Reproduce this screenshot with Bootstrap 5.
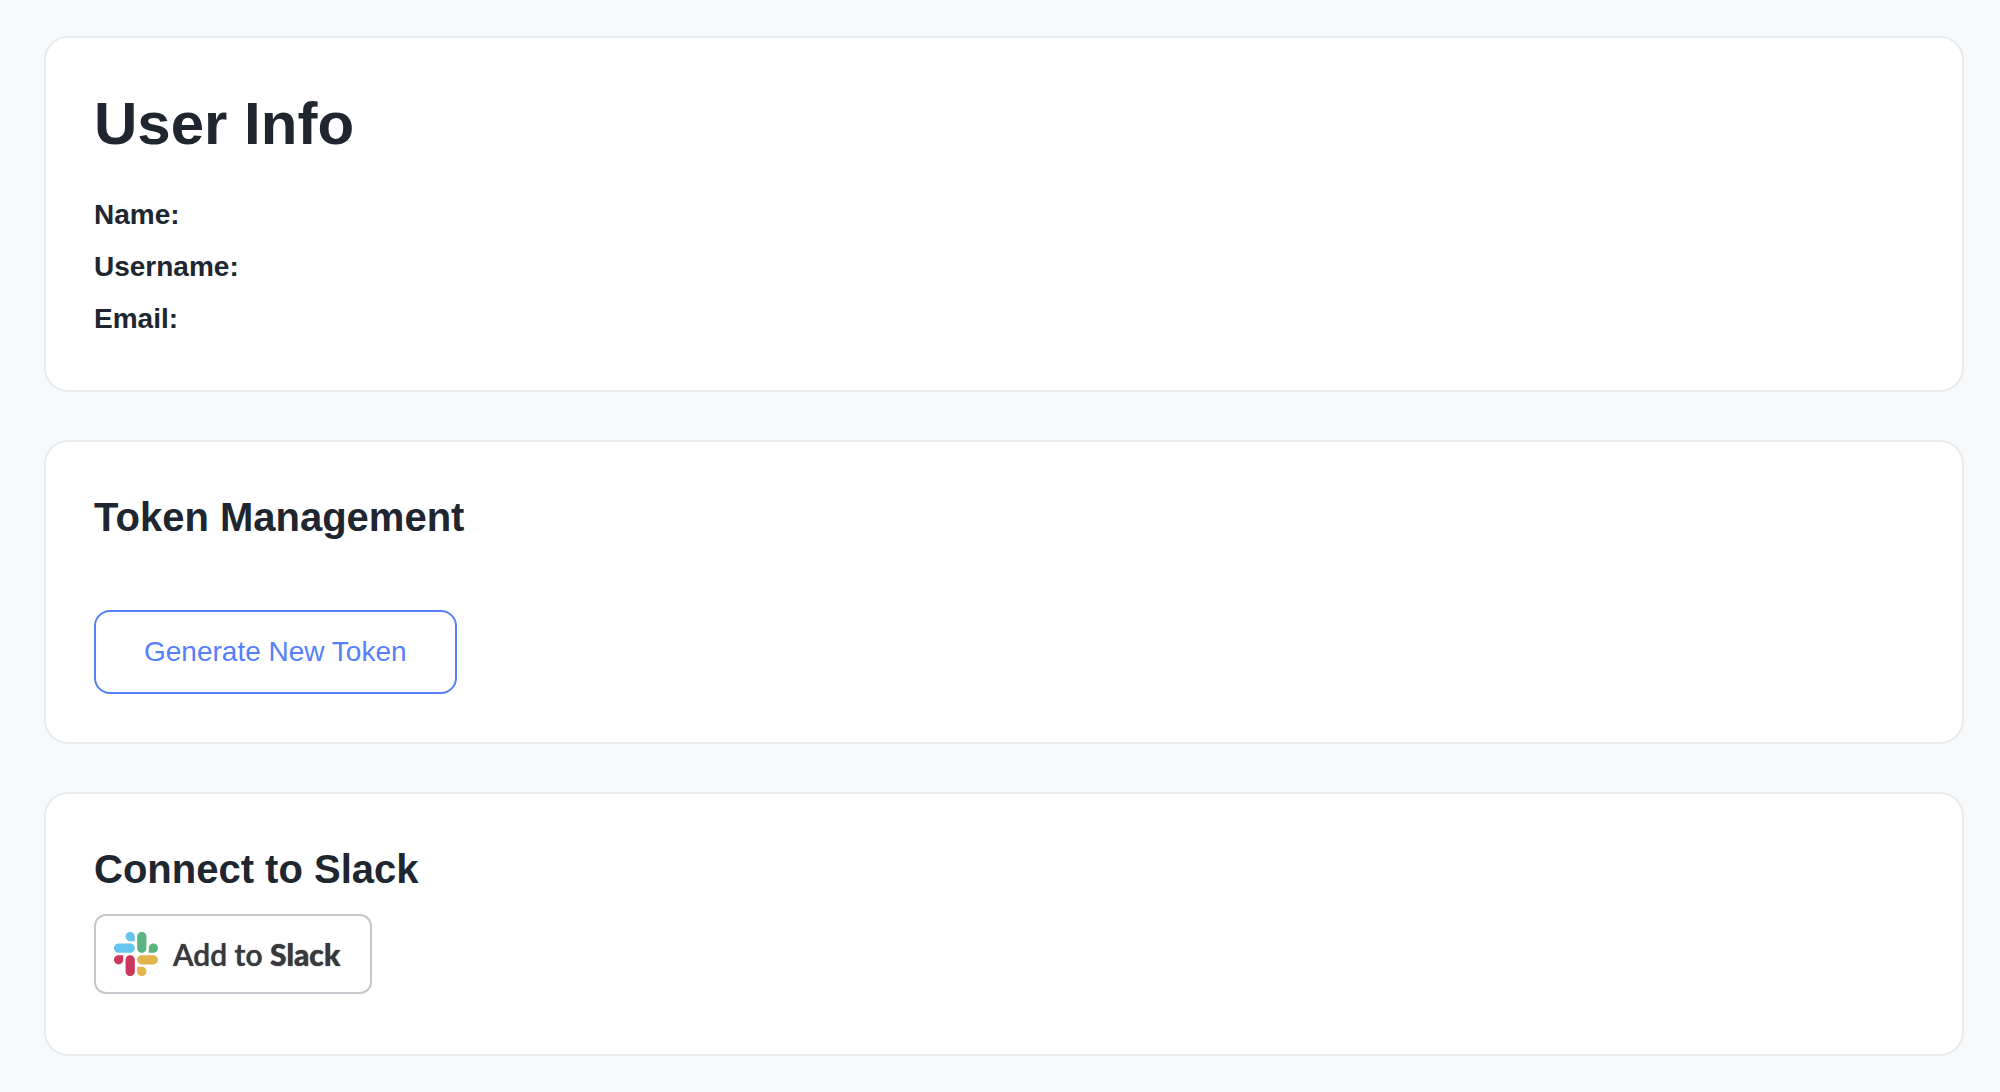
<!DOCTYPE html>
<html lang="en">
<head>
<meta charset="utf-8">
<meta name="viewport" content="width=device-width, initial-scale=1">
<title>User Info</title>
<link rel="stylesheet" href="https://cdn.jsdelivr.net/npm/bootstrap@5.3.0/dist/css/bootstrap.min.css">
<style>
  body { background: #f8f9fb; color: #202630; font-family: "Liberation Sans", Arial, sans-serif; font-size: 28px; line-height: 40px; }
  .page { padding: 36px 36px 24px 44px; gap: 48px; }
  .panel { background: #fff; color: inherit; border: 2px solid #e7ebee; border-radius: 24px; }
  .panel > .card-body { padding: 48px; }
  .panel h1 { font-size: 60px; line-height: 76px; font-weight: 700; margin-bottom: 33px; }
  .panel h2 { font-size: 40px; line-height: 54px; font-weight: 700; margin-bottom: 18px; }
  .info-list { gap: 12px; padding-bottom: 3px; }
  .btn-token { --bs-btn-color: #5580fa; --bs-btn-border-color: #5580fa; --bs-btn-hover-color: #fff; --bs-btn-hover-bg: #5580fa; --bs-btn-hover-border-color: #5580fa;
    font-size: 28px; line-height: 40px; padding: 20px 48px; border-width: 2px; border-radius: 16px; }
  .btn-slack { width: 278px; height: 80px; padding: 0 18px; gap: 15px; border: 2px solid #c7c6cc; border-radius: 12px; background: #fff; color: #39393e;
    font-family: Lato, "Liberation Sans", sans-serif; font-size: 30px; line-height: 40px; font-weight: 600; text-shadow: 0 0 1px currentColor; margin-bottom: 12px; }
  .btn-slack strong { font-weight: 900; }
</style>
</head>
<body>
<main class="page d-flex flex-column">
  <section class="card panel">
    <div class="card-body">
      <h1>User Info</h1>
      <div class="info-list d-flex flex-column">
        <div><strong>Name:</strong></div>
        <div><strong>Username:</strong></div>
        <div><strong>Email:</strong></div>
      </div>
    </div>
  </section>
  <section class="card panel">
    <div class="card-body">
      <h2>Token Management</h2>
      <div class="pt-5">
        <button type="button" class="btn btn-token d-block">Generate New Token</button>
      </div>
    </div>
  </section>
  <section class="card panel">
    <div class="card-body">
      <h2>Connect to Slack</h2>
      <a href="#" class="btn-slack d-flex align-items-center text-decoration-none">
        <svg width="44" height="44" viewBox="0 0 122.8 122.8" aria-hidden="true">
          <path fill="#ce375c" d="M25.8 77.6c0 7.1-5.8 12.9-12.9 12.9S0 84.7 0 77.6s5.8-12.9 12.9-12.9h12.9v12.9zM32.3 77.6c0-7.1 5.8-12.9 12.9-12.9s12.9 5.8 12.9 12.9v32.3c0 7.1-5.8 12.9-12.9 12.9s-12.9-5.8-12.9-12.9V77.6z"/>
          <path fill="#67c4ed" d="M45.2 25.8c-7.1 0-12.9-5.8-12.9-12.9S38.1 0 45.2 0s12.9 5.8 12.9 12.9v12.9H45.2zM45.2 32.3c7.1 0 12.9 5.8 12.9 12.9s-5.8 12.9-12.9 12.9H12.9C5.8 58.1 0 52.3 0 45.2s5.8-12.9 12.9-12.9h32.3z"/>
          <path fill="#5bb381" d="M97 45.2c0-7.1 5.8-12.9 12.9-12.9s12.9 5.8 12.9 12.9-5.8 12.9-12.9 12.9H97V45.2zM90.5 45.2c0 7.1-5.8 12.9-12.9 12.9s-12.9-5.8-12.9-12.9V12.9C64.7 5.8 70.5 0 77.6 0s12.9 5.8 12.9 12.9v32.3z"/>
          <path fill="#e3b34c" d="M77.6 97c7.1 0 12.9 5.8 12.9 12.9s-5.8 12.9-12.9 12.9-12.9-5.8-12.9-12.9V97h12.9zM77.6 90.5c-7.1 0-12.9-5.8-12.9-12.9s5.8-12.9 12.9-12.9h32.3c7.1 0 12.9 5.8 12.9 12.9s-5.8 12.9-12.9 12.9H77.6z"/>
        </svg>
        <span>Add to <strong>Slack</strong></span>
      </a>
    </div>
  </section>
</main>
<script src="https://cdn.jsdelivr.net/npm/bootstrap@5.3.0/dist/js/bootstrap.bundle.min.js"></script>
</body>
</html>
